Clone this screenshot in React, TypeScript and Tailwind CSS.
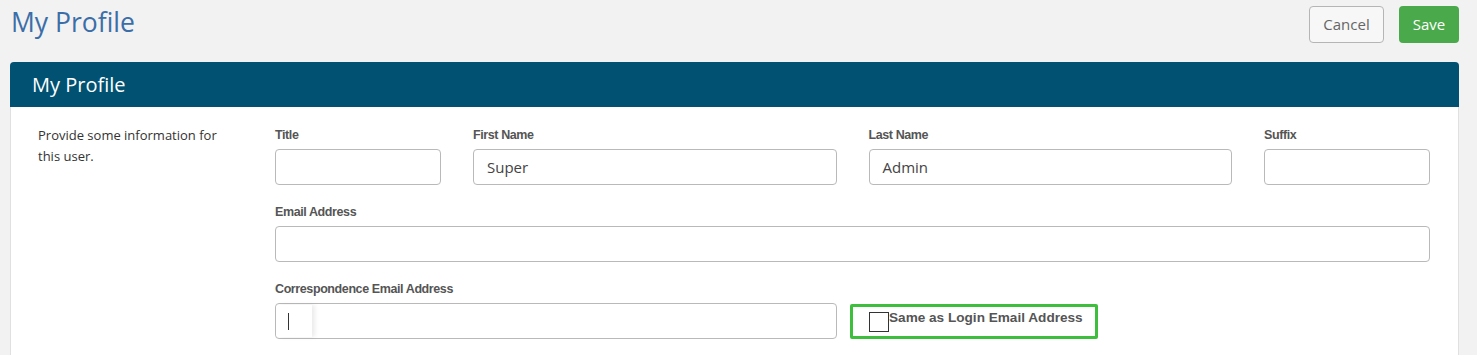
import React from "react"

const body = { fontFamily: '"Open Sans", "Liberation Sans", sans-serif' }
const labelFont = { fontFamily: '"Liberation Sans", Arial, sans-serif' }

function Label({ children }: { children: React.ReactNode }) {
  return (
    <div className="text-[12.5px] tracking-[-0.4px] font-bold text-[#555] h-[15px] leading-[15px] mt-[1px] mb-[7px]" style={labelFont}>
      {children}
    </div>
  )
}

function Field({ label, value, className }: { label: string; value?: string; className?: string }) {
  return (
    <div className={className}>
      <Label>{label}</Label>
      <div className="h-[36px] -mt-[1px] rounded-[4px] border border-[#b9b9b9] bg-white px-[13px] flex items-center text-[15px] text-[#444]">
        {value}
      </div>
    </div>
  )
}

export default function App() {
  return (
    <div className="w-[1477px] h-[355px] bg-[#f2f2f2] overflow-hidden" style={body}>
      <div className="flex items-start justify-between pl-[11px] pr-[18px] pt-[6px] h-[62px]">
        <h1 className="text-[26.5px] leading-[32px] text-[#3b6ea8]">My Profile</h1>
        <div className="flex gap-[15px]">
          <button className="h-[37px] w-[75px] rounded-[4px] border border-[#b5b5b5] bg-[#f7f7f7] text-[15px] text-[#666]">
            Cancel
          </button>
          <button className="h-[37px] w-[60px] rounded-[4px] bg-[#4aa94a] text-[15px] text-white">Save</button>
        </div>
      </div>
      <div className="ml-[10px] mr-[18px] rounded-t-[4px] bg-white border-l border-r border-[#e0e0e0]">
        <div className="h-[45px] bg-[#005172] rounded-t-[4px] -mx-px px-[22px] flex items-center text-[20px] text-white">
          My Profile
        </div>
        <div className="flex pl-[27px] pr-[28px] pt-[20px] pb-[20px]">
          <div className="w-[237px] shrink-0 pr-[35px] -mt-[2px]">
            <p className="text-[13px] leading-[21px] text-[#333]">Provide some information for this user.</p>
          </div>
          <div className="flex-1 flex flex-col gap-[19px]">
            <div className="flex gap-[32px]">
              <Field label="Title" className="w-[166px]" />
              <Field label="First Name" value="Super" className="flex-1" />
              <Field label="Last Name" value="Admin" className="flex-1" />
              <Field label="Suffix" className="w-[166px]" />
            </div>
            <Field label="Email Address" />
            <div>
              <Label>Correspondence Email Address</Label>
              <div className="flex items-center gap-[13px] -mt-[1px]">
                <div className="w-[562px] h-[36px] rounded-[4px] border border-[#b9b9b9] bg-white flex items-center">
                  <div className="h-[32px] w-[36px] rounded-l-[3px] bg-white shadow-[3px_0_4px_rgba(0,0,0,0.08)] flex items-center pl-[12px]">
                    <div className="w-px h-[17px] bg-[#333]" />
                  </div>
                </div>
                <div className="w-[248px] h-[35px] border-[3px] border-[#3dbe3d] rounded-[2px] flex items-start pl-[16px] pt-[5px]">
                  <div className="w-[20px] h-[20px] border border-[#333] bg-white" />
                  <span className="text-[13.6px] font-bold text-[#555] leading-[15px] -mt-[2px]" style={labelFont}>
                    Same as Login Email Address
                  </span>
                </div>
              </div>
            </div>
          </div>
        </div>
      </div>
    </div>
  )
}
